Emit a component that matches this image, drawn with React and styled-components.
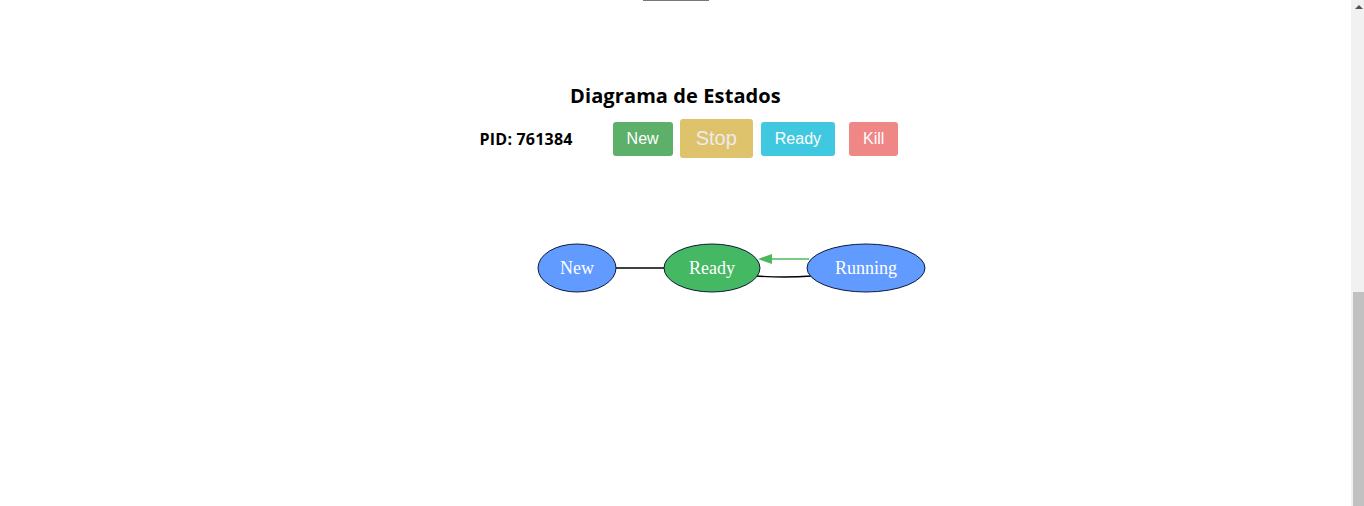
import React from "react";
import styled, { createGlobalStyle } from "styled-components";

const Global = createGlobalStyle`
  html, body {
    margin: 0;
    padding: 0;
    background: #fff;
    font-family: "Open Sans", "Liberation Sans", sans-serif;
    overflow: hidden;
  }
`;

const Page = styled.div`
  display: flex;
  height: 100vh;
`;

const Main = styled.main`
  flex: 1;
  display: flex;
  flex-direction: column;
  align-items: center;
`;

const Underline = styled.div`
  width: 66px;
  height: 1px;
  background: #777;
  margin-left: 1px;
`;

const Section = styled.section`
  display: flex;
  flex-direction: column;
  align-items: center;
  padding-top: 81px;
`;

const Title = styled.h2`
  margin: 0;
  font-size: 20px;
  font-weight: 700;
  color: #000;
  line-height: 28px;
  letter-spacing: 0.1px;
`;

const Controls = styled.div`
  display: flex;
  align-items: center;
  margin-top: 9px;
  padding-left: 27px;
`;

const Pid = styled.span`
  font-size: 16px;
  font-weight: 700;
  color: #000;
  margin-right: 40px;
  letter-spacing: 0.2px;
`;

const Button = styled.button`
  border: none;
  border-radius: 3px;
  height: ${(p) => (p.$big ? 39 : 34)}px;
  padding: 0 ${(p) => (p.$big ? 16 : 14)}px;
  margin-left: ${(p) => p.$gap || 0}px;
  background: ${(p) => p.$bg};
  color: ${(p) => p.$fg || "#fff"};
  font-family: "Liberation Sans", Arial, sans-serif;
  font-size: ${(p) => (p.$big ? 20 : 16)}px;
  cursor: pointer;
`;

const GraphBox = styled.div`
  margin-top: 72px;
  display: flex;
  justify-content: center;
`;

const NodeText = styled.text`
  font-family: "Liberation Serif", "Times New Roman", serif;
  font-size: 18px;
  fill: #fff;
`;

const ScrollTrack = styled.div`
  width: 13px;
  background: #f1f1f1;
  display: flex;
  flex-direction: column;
  justify-content: space-between;
`;

const ScrollArrow = styled.div`
  width: 0;
  height: 0;
  margin: 5px 0 0 4px;
  border-left: 4px solid transparent;
  border-right: 4px solid transparent;
  border-bottom: 4px solid #505050;
`;

const ScrollThumb = styled.div`
  height: 214px;
  margin-left: 2px;
  background: #c1c1c1;
`;

const nodes = [
  { label: "New", cx: 157, rx: 39, fill: "#619bff" },
  { label: "Ready", cx: 292, rx: 48, fill: "#45b864" },
  { label: "Running", cx: 446, rx: 59, fill: "#619bff" },
];

export default function App() {
  return (
    <>
      <Global />
      <Page>
        <Main>
          <Underline />
          <Section>
            <Title>Diagrama de Estados</Title>
            <Controls>
              <Pid>PID: 761384</Pid>
              <Button $bg="#5cb06a">New</Button>
              <Button $bg="#dec26c" $fg="#ececec" $big $gap={7}>Stop</Button>
              <Button $bg="#40c8e0" $gap={8}>Ready</Button>
              <Button $bg="#f08787" $gap={14}>Kill</Button>
            </Controls>
            <GraphBox>
              <svg width="511" height="80" viewBox="0 0 511 80">
                <line x1="196" y1="38" x2="244" y2="38" stroke="#000" strokeWidth="1.3" />
                <line x1="389" y1="29" x2="350" y2="29" stroke="#4cb85c" strokeWidth="1.3" />
                <polygon points="338,29 352,24 352,34" fill="#4cb85c" />
                <path d="M336 46 Q364 48 392 46" fill="none" stroke="#000" strokeWidth="1.3" />
                {nodes.map((n) => (
                  <g key={n.label}>
                    <ellipse cx={n.cx} cy="38" rx={n.rx} ry="24" fill={n.fill} stroke="#0d1a3a" strokeWidth="1" />
                    <NodeText x={n.cx} y="44" textAnchor="middle">{n.label}</NodeText>
                  </g>
                ))}
              </svg>
            </GraphBox>
          </Section>
        </Main>
        <ScrollTrack>
          <ScrollArrow />
          <ScrollThumb />
        </ScrollTrack>
      </Page>
    </>
  );
}
